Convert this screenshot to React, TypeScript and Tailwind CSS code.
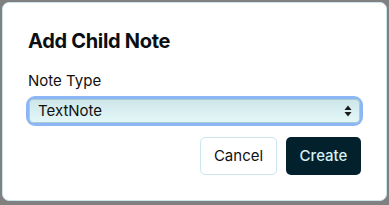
import React from "react";

export default function App() {
  return (
    <div
      className="w-[389px] h-[205px] bg-[#808080] p-[2px] pb-[4px]"
      style={{ fontFamily: "Inter, 'Noto Sans', sans-serif" }}
    >
      <div className="h-full w-full rounded-[7px] border border-[#cbe3ea] bg-white px-[25px] pt-[24px] flex flex-col">
        <h2 className="text-[20px] leading-[28px] font-bold text-[#0b0f12] tracking-[-0.3px]">
          Add Child Note
        </h2>
        <label className="mt-[16px] text-[15px] leading-[20px] text-[#111]">Note Type</label>
        <div className="mt-[8px] rounded-[6px] ring-[3px] ring-[#8cb6f6] mx-[1px]">
          <div className="relative h-[24px] rounded-[4px] bg-gradient-to-b from-[#cfe7ea] to-[#e3f7f8] border border-[#a9cbd2] flex items-center pl-[8px]">
            <span className="text-[15px] leading-[20px] text-[#111]">TextNote</span>
            <svg
              className="absolute right-[7px] top-1/2 -translate-y-1/2"
              width="8"
              height="12"
              viewBox="0 0 8 12"
            >
              <path d="M4 0.5 L7.5 5 L0.5 5 Z" fill="#1a1a1a" />
              <path d="M4 11.5 L7.5 7 L0.5 7 Z" fill="#1a1a1a" />
            </svg>
          </div>
        </div>
        <div className="mt-[14px] flex justify-end gap-[9px]">
          <button className="h-[38px] w-[77px] rounded-[5px] border border-[#cde5ed] bg-white text-[15px] text-[#111]">
            Cancel
          </button>
          <button className="h-[38px] w-[75px] rounded-[5px] bg-[#03202d] text-[15px] font-medium text-[#d7f2f5]">
            Create
          </button>
        </div>
      </div>
    </div>
  );
}
